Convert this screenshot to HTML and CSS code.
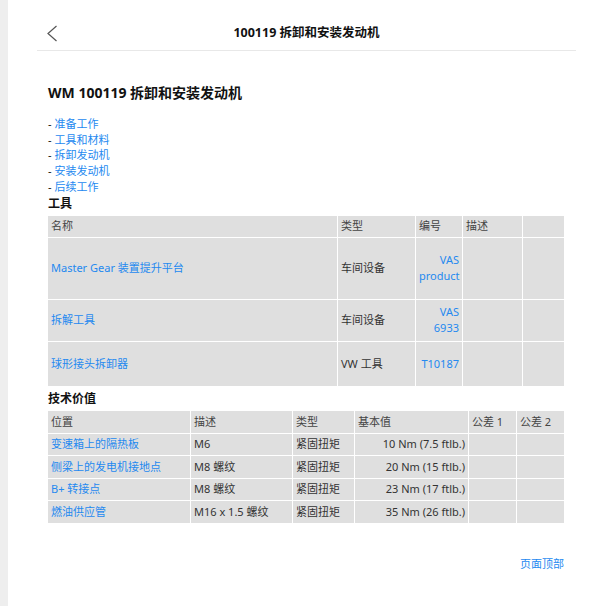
FILE: index.html
```html
<!DOCTYPE html>
<html lang="zh-CN">
<head>
<meta charset="utf-8">
<title>100119 拆卸和安装发动机</title>
<link rel="stylesheet" href="styles.css">
</head>
<body>
<div class="page">
  <header class="topbar">
    <a class="back" href="#">
      <svg width="12" height="17" viewBox="0 0 12 17"><path d="M10.5 1 L2 8.5 L10.5 16" fill="none" stroke="#555" stroke-width="1.2"/></svg>
    </a>
    <div class="title">100119 拆卸和安装发动机</div>
    <div></div>
  </header>
  <main class="content">
    <h1 class="doc-title">WM 100119 拆卸和安装发动机</h1>
    <ul class="toc">
      <li>- <a href="#">准备工作</a></li>
      <li>- <a href="#">工具和材料</a></li>
      <li>- <a href="#">拆卸发动机</a></li>
      <li>- <a href="#">安装发动机</a></li>
      <li>- <a href="#">后续工作</a></li>
    </ul>
    <h2 class="sec sec-tools">工具</h2>
    <table class="tbl tools">
      <colgroup>
        <col class="c289"><col class="c77"><col class="c46"><col class="c59"><col class="c41">
      </colgroup>
      <thead>
        <tr class="h21"><th>名称</th><th>类型</th><th>编号</th><th>描述</th><th></th></tr>
      </thead>
      <tbody>
        <tr class="h61"><td><a href="#">Master Gear 装置提升平台</a></td><td>车间设备</td><td class="num"><a href="#">VAS<br>product</a></td><td></td><td></td></tr>
        <tr class="h41"><td><a href="#">拆解工具</a></td><td>车间设备</td><td class="num"><a href="#">VAS<br>6933</a></td><td></td><td></td></tr>
        <tr class="h44"><td><a href="#">球形接头拆卸器</a></td><td>VW 工具</td><td class="num"><a href="#">T10187</a></td><td></td><td></td></tr>
      </tbody>
    </table>
    <h2 class="sec sec-tech">技术价值</h2>
    <table class="tbl tech">
      <colgroup>
        <col class="c142"><col class="c101"><col class="c61"><col class="c113"><col class="c47"><col class="c47">
      </colgroup>
      <thead>
        <tr class="h22"><th>位置</th><th>描述</th><th>类型</th><th>基本值</th><th>公差 1</th><th>公差 2</th></tr>
      </thead>
      <tbody>
        <tr class="h21"><td><a href="#">变速箱上的隔热板</a></td><td>M6</td><td>紧固扭矩</td><td class="num">10 Nm (7.5 ftlb.)</td><td></td><td></td></tr>
        <tr class="h22"><td><a href="#">侧梁上的发电机接地点</a></td><td>M8 螺纹</td><td>紧固扭矩</td><td class="num">20 Nm (15 ftlb.)</td><td></td><td></td></tr>
        <tr class="h21"><td><a href="#">B+ 转接点</a></td><td>M8 螺纹</td><td>紧固扭矩</td><td class="num">23 Nm (17 ftlb.)</td><td></td><td></td></tr>
        <tr class="h22"><td><a href="#">燃油供应管</a></td><td>M16 x 1.5 螺纹</td><td>紧固扭矩</td><td class="num">35 Nm (26 ftlb.)</td><td></td><td></td></tr>
      </tbody>
    </table>
    <div class="totop"><a href="#">页面顶部</a></div>
  </main>
</div>
</body>
</html>
```
FILE: styles.css
```css
html, body {
  margin: 0;
  padding: 0;
}
body {
  background: #eeeeee;
  font-family: "Noto Sans", "Noto Sans CJK SC", sans-serif;
  font-size: 11px;
  color: #333;
}
.page {
  margin-left: 8px;
  background: #ffffff;
  min-height: 606px;
  overflow: hidden;
}
a {
  color: #2489f0;
  text-decoration: none;
}
.topbar {
  margin: 0 23px 0 29px;
  height: 51px;
  border-bottom: 1px solid #e8e8e8;
  display: grid;
  grid-template-columns: 1fr auto 1fr;
  align-items: center;
  padding-top: 16px;
  box-sizing: border-box;
}
.back {
  display: flex;
  padding-left: 9px;
}
.title {
  font-size: 12.5px;
  font-weight: 700;
  color: #111;
  line-height: 18px;
}
.content {
  padding: 0 35px 0 40px;
}
.doc-title {
  font-size: 14px;
  font-weight: 700;
  color: #111;
  line-height: 20px;
  margin: 32px 0 13px;
}
.toc {
  list-style: none;
  margin: 0;
  padding: 0;
  line-height: 15.7px;
  color: #111;
}
.sec {
  font-size: 12px;
  font-weight: 700;
  color: #111;
  line-height: 16px;
  margin: 0;
}
.sec-tools { margin: 1px 0 3px; }
.sec-tech { margin: 4px 0 3px; }
.tbl {
  border-collapse: separate;
  border-spacing: 1px;
  margin: 0 -1px;
  width: calc(100% + 2px);
  table-layout: fixed;
  background: #fff;
}
.tbl th, .tbl td {
  background: #dfdfdf;
  padding: 0 3px;
  text-align: left;
  vertical-align: middle;
  font-weight: 400;
  line-height: 16px;
  overflow: hidden;
}
.tbl th { color: #444; }
.tbl td { color: #333; }
.tbl td.num { text-align: right; }
.c289 { width: 289px; }
.c77 { width: 77px; }
.c46 { width: 46px; }
.c59 { width: 59px; }
.c41 { width: 41px; }
.c142 { width: 142px; }
.c101 { width: 101px; }
.c61 { width: 61px; }
.c113 { width: 113px; }
.c47 { width: 47px; }
.h21 { height: 21px; }
.h22 { height: 22px; }
.h41 { height: 41px; }
.h44 { height: 44px; }
.h61 { height: 61px; }
.totop {
  text-align: right;
  line-height: 16px;
  margin-top: 32px;
}
```
